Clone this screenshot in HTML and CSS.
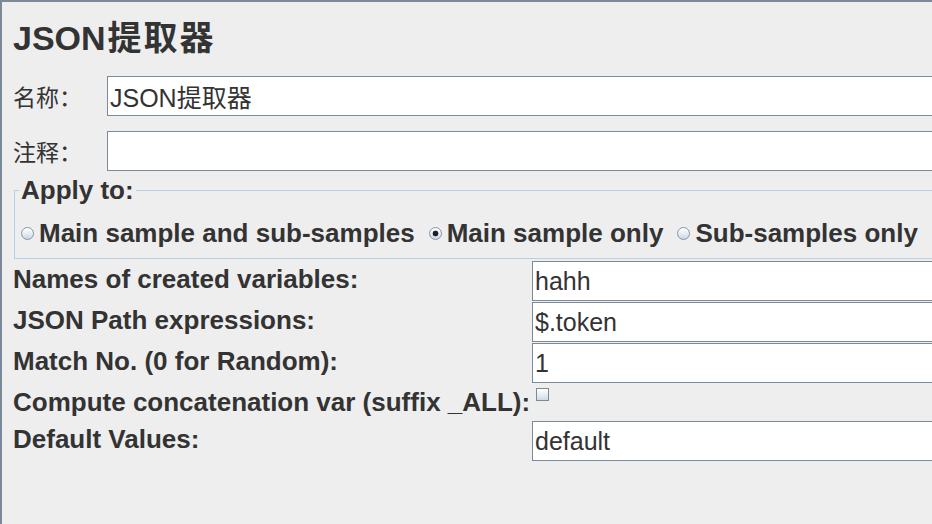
FILE: index.html
```html
<!DOCTYPE html>
<html lang="zh">
<head>
<meta charset="utf-8">
<title>JSON提取器</title>
<link rel="stylesheet" href="styles.css">
</head>
<body>
<div class="frame">
  <div class="title">JSON<span class="title-cjk">提取器</span></div>

  <div class="field-row">
    <label class="cjk-label" for="name">名称：</label>
    <input id="name" class="text-input" type="text" value="JSON提取器">
  </div>
  <div class="field-row comment-row">
    <label class="cjk-label" for="comment">注释：</label>
    <input id="comment" class="text-input" type="text" value="">
  </div>

  <fieldset class="group">
    <legend class="group-title">Apply to:</legend>
    <div class="radio-row">
      <span class="option"><span class="radio"></span>Main sample and sub-samples</span>
      <span class="option"><span class="radio checked"></span>Main sample only</span>
      <span class="option"><span class="radio"></span>Sub-samples only</span>
    </div>
  </fieldset>

  <div class="form-grid">
    <div class="label">Names of created variables:</div>
    <input class="text-input" type="text" value="hahh">
    <div class="label">JSON Path expressions:</div>
    <input class="text-input" type="text" value="$.token">
    <div class="label">Match No. (0 for Random):</div>
    <input class="text-input" type="text" value="1">
    <div class="label">Compute concatenation var (suffix _ALL):</div>
    <div class="check-cell"><span class="checkbox"></span></div>
    <div class="label">Default Values:</div>
    <input class="text-input" type="text" value="default">
  </div>
</div>
</body>
</html>
```

FILE: styles.css
```css
html, body {
  margin: 0;
  padding: 0;
  background: #eeeeee;
}

.frame {
  box-sizing: border-box;
  width: 932px;
  height: 524px;
  overflow: hidden;
  border-top: 2px solid #7a8a99;
  border-left: 2px solid #7a8a99;
  padding-left: 11px;
  background: #eeeeee;
  color: #333333;
  font-family: "Liberation Sans", "Noto Sans CJK SC", sans-serif;
}

.title {
  margin-top: 16px;
  height: 40px;
  font-size: 34px;
  line-height: 40px;
  font-weight: bold;
  white-space: nowrap;
}

.title-cjk {
  margin-left: 2px;
  letter-spacing: 2px;
}

.field-row {
  display: flex;
  align-items: center;
  height: 40px;
  margin-top: 18px;
  margin-right: -30px;
}

.comment-row {
  margin-top: 15px;
}

.cjk-label {
  width: 94px;
  flex: none;
  font-family: "Noto Sans CJK SC", sans-serif;
  font-size: 23px;
  line-height: 30px;
}

.text-input {
  box-sizing: border-box;
  height: 40px;
  margin: 0;
  padding: 0 2px;
  border: 1px solid #7a8a99;
  background: #ffffff;
  color: #333333;
  font-family: "Liberation Sans", "Noto Sans CJK SC", sans-serif;
  font-size: 25px;
  outline: none;
  min-width: 0;
  flex: 1;
  width: 100%;
}

.group {
  margin: 6px -30px 0 1px;
  padding: 15px 0 10px 6px;
  border: 1px solid #b8cfe5;
  min-width: 0;
}

.group-title {
  margin-left: -2px;
  padding: 0 2px;
  font-size: 26px;
  line-height: 26px;
  font-weight: bold;
}

.radio-row {
  display: flex;
  align-items: center;
  height: 30px;
  font-size: 26px;
  line-height: 30px;
  font-weight: bold;
  white-space: nowrap;
}

.option {
  display: inline-flex;
  align-items: center;
  gap: 5px;
  margin-right: 14px;
}

.radio {
  box-sizing: border-box;
  display: inline-block;
  width: 13px;
  height: 13px;
  border-radius: 50%;
  border: 1px solid #8596a8;
  background: linear-gradient(180deg, #ffffff 0%, #e6ebf2 55%, #c9d4e2 100%);
  margin-top: 1px;
}

.radio.checked {
  background:
    radial-gradient(circle, #1e1e1e 0, #1e1e1e 2.6px, transparent 3.2px),
    linear-gradient(180deg, #ffffff 0%, #e6ebf2 55%, #c9d4e2 100%);
}

.form-grid {
  display: grid;
  grid-template-columns: 519px 1fr;
  grid-template-rows: 40px 40px 40px 36px 40px;
  row-gap: 1px;
  margin-top: 2px;
  margin-right: -30px;
}

.label {
  font-size: 26px;
  line-height: 36px;
  font-weight: bold;
  white-space: nowrap;
}

.check-cell {
  padding: 4px 0 0 4px;
}

.checkbox {
  box-sizing: border-box;
  display: block;
  width: 13px;
  height: 13px;
  border: 1px solid #7a8a99;
  background: linear-gradient(180deg, #ffffff 0%, #e4eaf2 60%, #cdd8e6 100%);
}
```
